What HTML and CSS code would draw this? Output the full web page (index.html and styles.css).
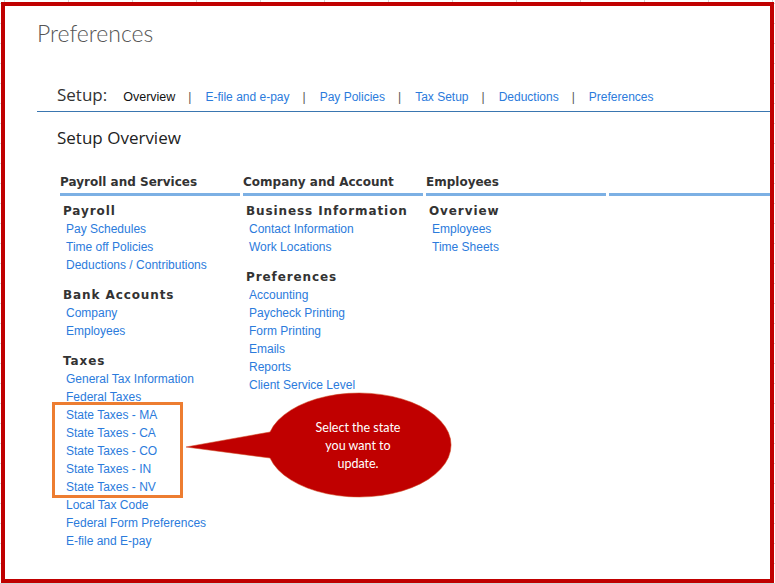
FILE: index.html
```html
<!DOCTYPE html>
<html lang="en">
<head>
<meta charset="utf-8">
<title>Preferences</title>
<link rel="stylesheet" href="styles.css">
</head>
<body>
<div class="frame">
  <h1 class="page-title">Preferences</h1>
  <nav class="setup-nav">
    <span class="setup-label">Setup:</span>
    <span class="nav-current">Overview</span>
    <span class="sep">|</span>
    <a class="nav-link" href="#">E-file and e-pay</a>
    <span class="sep">|</span>
    <a class="nav-link" href="#">Pay Policies</a>
    <span class="sep">|</span>
    <a class="nav-link" href="#">Tax Setup</a>
    <span class="sep">|</span>
    <a class="nav-link" href="#">Deductions</a>
    <span class="sep">|</span>
    <a class="nav-link" href="#">Preferences</a>
  </nav>
  <h2 class="overview-title">Setup Overview</h2>
  <div class="columns">
    <section class="col">
      <h3 class="col-head">Payroll and Services</h3>
      <div class="group">
        <h4 class="group-head">Payroll</h4>
        <ul class="links">
          <li><a href="#">Pay Schedules</a></li>
          <li><a href="#">Time off Policies</a></li>
          <li><a href="#">Deductions / Contributions</a></li>
        </ul>
      </div>
      <div class="group">
        <h4 class="group-head">Bank Accounts</h4>
        <ul class="links">
          <li><a href="#">Company</a></li>
          <li><a href="#">Employees</a></li>
        </ul>
      </div>
      <div class="group">
        <h4 class="group-head">Taxes</h4>
        <ul class="links">
          <li><a href="#">General Tax Information</a></li>
          <li><a href="#">Federal Taxes</a></li>
          <li><a href="#">State Taxes - MA</a></li>
          <li><a href="#">State Taxes - CA</a></li>
          <li><a href="#">State Taxes - CO</a></li>
          <li><a href="#">State Taxes - IN</a></li>
          <li><a href="#">State Taxes - NV</a></li>
          <li><a href="#">Local Tax Code</a></li>
          <li><a href="#">Federal Form Preferences</a></li>
          <li><a href="#">E-file and E-pay</a></li>
        </ul>
      </div>
    </section>
    <section class="col">
      <h3 class="col-head">Company and Account</h3>
      <div class="group">
        <h4 class="group-head">Business Information</h4>
        <ul class="links">
          <li><a href="#">Contact Information</a></li>
          <li><a href="#">Work Locations</a></li>
        </ul>
      </div>
      <div class="group">
        <h4 class="group-head">Preferences</h4>
        <ul class="links">
          <li><a href="#">Accounting</a></li>
          <li><a href="#">Paycheck Printing</a></li>
          <li><a href="#">Form Printing</a></li>
          <li><a href="#">Emails</a></li>
          <li><a href="#">Reports</a></li>
          <li><a href="#">Client Service Level</a></li>
        </ul>
      </div>
    </section>
    <section class="col">
      <h3 class="col-head">Employees</h3>
      <div class="group">
        <h4 class="group-head">Overview</h4>
        <ul class="links">
          <li><a href="#">Employees</a></li>
          <li><a href="#">Time Sheets</a></li>
        </ul>
      </div>
    </section>
    <section class="col">
      <h3 class="col-head">&nbsp;</h3>
    </section>
  </div>

  <div class="highlight-box"></div>
  <svg class="callout" width="285" height="120" viewBox="175 385 285 120" xmlns="http://www.w3.org/2000/svg">
    <path d="M186,447 L270,432 A92,52 0 1 1 270,458 Z" fill="#c00000" stroke="#d2502a" stroke-width="1" stroke-opacity="0.55"/>
    <text x="358" y="431.5" class="callout-text" text-anchor="middle">Select the state</text>
    <text x="358" y="449.5" class="callout-text" text-anchor="middle">you want to</text>
    <text x="358" y="467.5" class="callout-text" text-anchor="middle">update.</text>
  </svg>
</div>
</body>
</html>
```
FILE: styles.css
```css
* {
  box-sizing: border-box;
}

body {
  margin: 0;
  width: 775px;
  height: 584px;
  overflow: hidden;
  background-color: #ffffff;
  background-image:
    linear-gradient(to right, #d4d4d4 1px, transparent 1px),
    linear-gradient(to bottom, #d4d4d4 1px, transparent 1px);
  background-size: 64px 100%, 100% 20px;
  background-position: 4px 0, 0 3px;
}

.frame {
  position: relative;
  margin: 2px 0 0 1px;
  width: 773px;
  height: 581px;
  border: 4px solid #c00000;
  background: #ffffff;
  font-family: "Liberation Sans", Arial, sans-serif;
}

.page-title {
  margin: 14px 0 0 32px;
  font-family: Lato, "Open Sans", sans-serif;
  font-weight: 300;
  font-size: 23px;
  line-height: 26px;
  color: #555555;
}

.setup-nav {
  display: flex;
  align-items: baseline;
  margin: 38px 0 0 32px;
  padding: 0 0 5px 20px;
  border-bottom: 1px solid #3a76b0;
  font-size: 12px;
}

.setup-label {
  font-family: "Open Sans", sans-serif;
  font-size: 17px;
  line-height: 22px;
  color: #333333;
  margin-right: 16px;
}

.nav-current {
  font-size: 12.5px;
  color: #111111;
}

.sep {
  margin: 0 14px 0 13px;
  color: #555555;
}

.nav-link {
  color: #2b7bdc;
  text-decoration: none;
}

.overview-title {
  margin: 15px 0 0 52px;
  font-family: "Open Sans", sans-serif;
  font-weight: 400;
  font-size: 17px;
  line-height: 22px;
  color: #222222;
}

.columns {
  display: grid;
  grid-template-columns: 180px 180px 180px 1fr;
  column-gap: 3px;
  margin: 25px 0 0 55px;
}

.col-head {
  margin: 0;
  padding-bottom: 3px;
  border-bottom: 3px solid #7cb0e4;
  font-family: "DejaVu Sans", Verdana, sans-serif;
  font-weight: bold;
  font-size: 12px;
  line-height: 16px;
  color: #333333;
  white-space: nowrap;
}

.group {
  margin-top: 13px;
}

.group:first-of-type {
  margin-top: 7px;
}

.group-head {
  margin: 0;
  padding-left: 3px;
  font-family: "DejaVu Sans", Verdana, sans-serif;
  font-weight: bold;
  font-size: 12px;
  line-height: 17px;
  letter-spacing: 0.9px;
  color: #333333;
  white-space: nowrap;
}

.links {
  list-style: none;
  margin: 0;
  padding: 0 0 0 6px;
}

.links li {
  font-size: 12px;
  line-height: 18px;
  white-space: nowrap;
}

.links a {
  color: #2b7bdc;
  text-decoration: none;
}

.highlight-box {
  position: absolute;
  left: 47px;
  top: 396px;
  width: 131px;
  height: 96px;
  border: 3px solid #ed7d31;
}

.callout {
  position: absolute;
  left: 170px;
  top: 379px;
}

.callout-text {
  font-family: Lato, "Open Sans", sans-serif;
  font-size: 12.5px;
  fill: #ffffff;
}
```
